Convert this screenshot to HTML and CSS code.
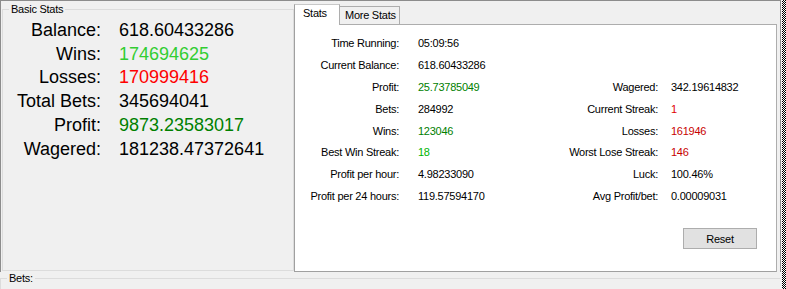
FILE: index.html
```html
<!DOCTYPE html>
<html>
<head>
<meta charset="utf-8">
<link rel="stylesheet" href="styles.css">
</head>
<body>
<div class="app">
  <div class="main">
    <div class="frame">
      <div class="left">
        <fieldset class="group basic">
          <legend>Basic Stats</legend>
          <div class="big-grid">
            <span class="bl">Balance:</span><span class="bv">618.60433286</span>
            <span class="bl">Wins:</span><span class="bv lime">174694625</span>
            <span class="bl">Losses:</span><span class="bv red">170999416</span>
            <span class="bl">Total Bets:</span><span class="bv">345694041</span>
            <span class="bl">Profit:</span><span class="bv green">9873.23583017</span>
            <span class="bl">Wagered:</span><span class="bv">181238.47372641</span>
          </div>
        </fieldset>
      </div>
      <div class="tabs">
        <div class="tab-head">
          <div class="tab active">Stats</div>
          <div class="tab">More Stats</div>
        </div>
        <div class="tab-panel">
          <div class="stat-grid">
            <span class="l">Time Running:</span><span class="v">05:09:56</span><span></span><span></span>
            <span class="l">Current Balance:</span><span class="v">618.60433286</span><span></span><span></span>
            <span class="l">Profit:</span><span class="v green">25.73785049</span><span class="l">Wagered:</span><span class="v2">342.19614832</span>
            <span class="l">Bets:</span><span class="v">284992</span><span class="l">Current Streak:</span><span class="v2 red2">1</span>
            <span class="l">Wins:</span><span class="v green">123046</span><span class="l">Losses:</span><span class="v2 red3">161946</span>
            <span class="l">Best Win Streak:</span><span class="v green2">18</span><span class="l">Worst Lose Streak:</span><span class="v2 red3">146</span>
            <span class="l">Profit per hour:</span><span class="v">4.98233090</span><span class="l">Luck:</span><span class="v2">100.46%</span>
            <span class="l">Profit per 24 hours:</span><span class="v">119.57594170</span><span class="l">Avg Profit/bet:</span><span class="v2">0.00009031</span>
          </div>
          <div class="btn-row"><button class="btn">Reset</button></div>
        </div>
      </div>
    </div>
    <fieldset class="group bets">
      <legend>Bets:</legend>
    </fieldset>
  </div>
  <div class="grip"></div>
</div>
</body>
</html>
```

FILE: styles.css
```css
html, body {
  margin: 0;
  padding: 0;
}
body {
  background: #f0f0f0;
  font-family: "Liberation Sans", Arial, sans-serif;
  font-size: 11px;
  color: #000;
  width: 786px;
  height: 289px;
  overflow: hidden;
}
.app {
  display: flex;
  width: 786px;
  height: 289px;
}
.main {
  width: 781px;
  display: flex;
  flex-direction: column;
}
.frame {
  height: 272px;
  box-sizing: border-box;
  border-top: 1px solid #8c8c8c;
  border-left: 1px solid #8c8c8c;
  border-right: 1px solid #8c8c8c;
  display: flex;
}
.left {
  width: 293px;
  display: flex;
  flex-direction: column;
}
.group {
  margin: 0;
  padding: 0;
  border: 1px solid #dcdcdc;
  min-width: 0;
}
.group legend {
  font-size: 11px;
  line-height: 13px;
  letter-spacing: -0.25px;
  padding: 0 2px;
  margin-left: 6px;
}
.basic {
  margin: 2px 0 1px 1px;
  flex: 1;
  padding-top: 3px;
}
.big-grid {
  display: grid;
  grid-template-columns: 98px auto;
  column-gap: 18px;
  font-size: 18px;
  line-height: 23.7px;
}
.bl {
  text-align: right;
}
.lime { color: #32cd32; }
.red { color: #ff0000; }
.green { color: #008000; }
.green2 { color: #00b400; }
.red2 { color: #e00000; }
.red3 { color: #c80000; }

.tabs {
  width: 486px;
  display: flex;
  flex-direction: column;
}
.tab-head {
  height: 23px;
  display: flex;
  align-items: flex-end;
}
.tab {
  box-sizing: border-box;
  height: 18px;
  width: 60px;
  padding: 2px 0 0 5px;
  line-height: 13px;
  letter-spacing: -0.25px;
  border-top: 1px solid #adadad;
  border-right: 1px solid #adadad;
  background: #f0f0f0;
}
.tab.active {
  position: relative;
  z-index: 1;
  height: 21px;
  width: 46px;
  margin-bottom: -1px;
  padding: 2px 0 0 8px;
  background: #fff;
  border-left: 1px solid #a0a0a0;
  border-top: 1px solid #c8c8c8;
  border-right: 1px solid #adadad;
}
.tab-panel {
  box-sizing: border-box;
  width: 483px;
  height: 248px;
  background: #fff;
  border: 1px solid #adadad;
  border-left-color: #a0a0a0;
  border-bottom-color: #a0a0a0;
  padding-top: 8px;
}
.stat-grid {
  display: grid;
  grid-template-columns: 104px 149px 110px auto;
  grid-auto-rows: 21.9px;
  line-height: 21.9px;
  letter-spacing: -0.25px;
}
.l {
  text-align: right;
}
.v {
  padding-left: 19px;
}
.v2 {
  padding-left: 13px;
}
.btn-row {
  display: flex;
  justify-content: flex-end;
  padding-right: 19px;
  margin-top: 20px;
}
.btn {
  box-sizing: border-box;
  width: 74px;
  height: 21px;
  background: #e1e1e1;
  border: 1px solid #adadad;
  font-family: "Liberation Sans", Arial, sans-serif;
  font-size: 11px;
  letter-spacing: -0.25px;
  color: #000;
  padding: 0;
}
.bets {
  margin: 0;
  flex: 1;
  border-bottom: none;
  border-right: none;
}
.grip {
  width: 4px;
  margin-left: 1px;
  height: 289px;
  background: repeating-conic-gradient(#000 0 25%, #fff 0 50%) 0 0 / 2px 2px;
}
```
